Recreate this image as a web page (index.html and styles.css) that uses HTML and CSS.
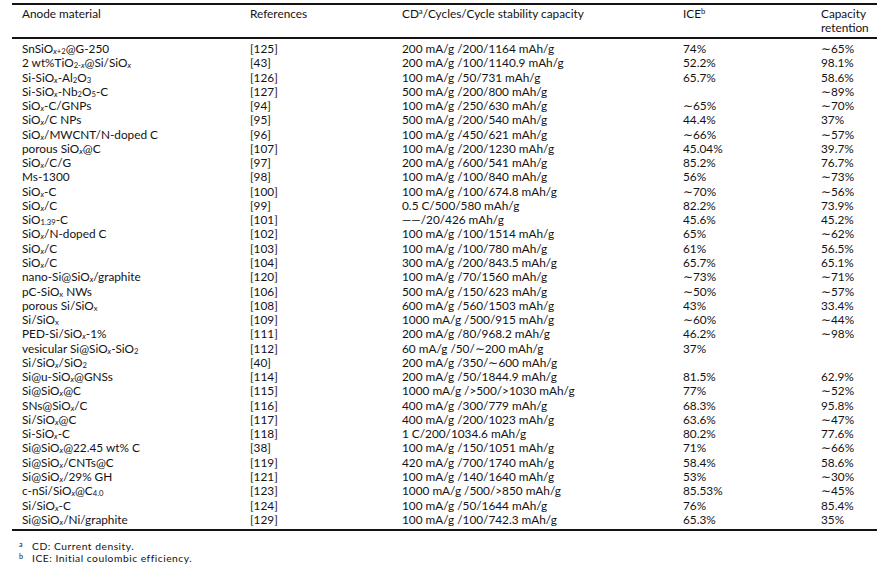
FILE: index.html
```html
<!DOCTYPE html>
<html>
<head>
<meta charset="utf-8">
<link rel="stylesheet" href="styles.css">
</head>
<body>
<div class="page">
<table class="data">
<colgroup>
<col class="c1"><col class="c2"><col class="c3"><col class="c4"><col class="c5">
</colgroup>
<thead>
<tr>
<th>Anode material</th>
<th>References</th>
<th>CD<sup>a</sup>/Cycles/Cycle stability capacity</th>
<th>ICE<sup>b</sup></th>
<th>Capacity<br>retention</th>
</tr>
</thead>
<tbody>
<tr class="first"><td>SnSiO<sub><i>x</i>+2</sub>@G-250</td><td>[125]</td><td>200 mA/g /200/1164 mAh/g</td><td>74%</td><td>∼65%</td></tr>
<tr><td>2 wt%TiO<sub>2-<i>x</i></sub>@Si/SiO<sub><i>x</i></sub></td><td>[43]</td><td>200 mA/g /100/1140.9 mAh/g</td><td>52.2%</td><td>98.1%</td></tr>
<tr><td>Si-SiO<sub><i>x</i></sub>-Al<sub>2</sub>O<sub>3</sub></td><td>[126]</td><td>100 mA/g /50/731 mAh/g</td><td>65.7%</td><td>58.6%</td></tr>
<tr><td>Si-SiO<sub><i>x</i></sub>-Nb<sub>2</sub>O<sub>5</sub>-C</td><td>[127]</td><td>500 mA/g /200/800 mAh/g</td><td></td><td>∼89%</td></tr>
<tr><td>SiO<sub><i>x</i></sub>-C/GNPs</td><td>[94]</td><td>100 mA/g /250/630 mAh/g</td><td>∼65%</td><td>∼70%</td></tr>
<tr><td>SiO<sub><i>x</i></sub>/C NPs</td><td>[95]</td><td>500 mA/g /200/540 mAh/g</td><td>44.4%</td><td>37%</td></tr>
<tr><td>SiO<sub><i>x</i></sub>/MWCNT/N-doped C</td><td>[96]</td><td>100 mA/g /450/621 mAh/g</td><td>∼66%</td><td>∼57%</td></tr>
<tr><td>porous SiO<sub><i>x</i></sub>@C</td><td>[107]</td><td>100 mA/g /200/1230 mAh/g</td><td>45.04%</td><td>39.7%</td></tr>
<tr><td>SiO<sub><i>x</i></sub>/C/G</td><td>[97]</td><td>200 mA/g /600/541 mAh/g</td><td>85.2%</td><td>76.7%</td></tr>
<tr><td>Ms-1300</td><td>[98]</td><td>100 mA/g /100/840 mAh/g</td><td>56%</td><td>∼73%</td></tr>
<tr><td>SiO<sub><i>x</i></sub>-C</td><td>[100]</td><td>100 mA/g /100/674.8 mAh/g</td><td>∼70%</td><td>∼56%</td></tr>
<tr><td>SiO<sub><i>x</i></sub>/C</td><td>[99]</td><td>0.5 C/500/580 mAh/g</td><td>82.2%</td><td>73.9%</td></tr>
<tr><td>SiO<sub>1.39</sub>-C</td><td>[101]</td><td>——/20/426 mAh/g</td><td>45.6%</td><td>45.2%</td></tr>
<tr><td>SiO<sub><i>x</i></sub>/N-doped C</td><td>[102]</td><td>100 mA/g /100/1514 mAh/g</td><td>65%</td><td>∼62%</td></tr>
<tr><td>SiO<sub><i>x</i></sub>/C</td><td>[103]</td><td>100 mA/g /100/780 mAh/g</td><td>61%</td><td>56.5%</td></tr>
<tr><td>SiO<sub><i>x</i></sub>/C</td><td>[104]</td><td>300 mA/g /200/843.5 mAh/g</td><td>65.7%</td><td>65.1%</td></tr>
<tr><td>nano-Si@SiO<sub><i>x</i></sub>/graphite</td><td>[120]</td><td>100 mA/g /70/1560 mAh/g</td><td>∼73%</td><td>∼71%</td></tr>
<tr><td>pC-SiO<sub>x</sub> NWs</td><td>[106]</td><td>500 mA/g /150/623 mAh/g</td><td>∼50%</td><td>∼57%</td></tr>
<tr><td>porous Si/SiO<sub>x</sub></td><td>[108]</td><td>600 mA/g /560/1503 mAh/g</td><td>43%</td><td>33.4%</td></tr>
<tr><td>Si/SiO<sub>x</sub></td><td>[109]</td><td>1000 mA/g /500/915 mAh/g</td><td>∼60%</td><td>∼44%</td></tr>
<tr><td>PED-Si/SiO<sub><i>x</i></sub>-1%</td><td>[111]</td><td>200 mA/g /80/968.2 mAh/g</td><td>46.2%</td><td>∼98%</td></tr>
<tr><td>vesicular Si@SiO<sub><i>x</i></sub>-SiO<sub>2</sub></td><td>[112]</td><td>60 mA/g /50/∼200 mAh/g</td><td>37%</td><td></td></tr>
<tr><td>Si/SiO<sub><i>x</i></sub>/SiO<sub>2</sub></td><td>[40]</td><td>200 mA/g /350/∼600 mAh/g</td><td></td><td></td></tr>
<tr><td>Si@u-SiO<sub><i>x</i></sub>@GNSs</td><td>[114]</td><td>200 mA/g /50/1844.9 mAh/g</td><td>81.5%</td><td>62.9%</td></tr>
<tr><td>Si@SiO<sub><i>x</i></sub>@C</td><td>[115]</td><td>1000 mA/g /&gt;500/&gt;1030 mAh/g</td><td>77%</td><td>∼52%</td></tr>
<tr><td>SNs@SiO<sub><i>x</i></sub>/C</td><td>[116]</td><td>400 mA/g /300/779 mAh/g</td><td>68.3%</td><td>95.8%</td></tr>
<tr><td>Si/SiO<sub><i>x</i></sub>@C</td><td>[117]</td><td>400 mA/g /200/1023 mAh/g</td><td>63.6%</td><td>∼47%</td></tr>
<tr><td>Si-SiO<sub><i>x</i></sub>-C</td><td>[118]</td><td>1 C/200/1034.6 mAh/g</td><td>80.2%</td><td>77.6%</td></tr>
<tr><td>Si@SiO<sub><i>x</i></sub>@22.45 wt% C</td><td>[38]</td><td>100 mA/g /150/1051 mAh/g</td><td>71%</td><td>∼66%</td></tr>
<tr><td>Si@SiO<sub><i>x</i></sub>/CNTs@C</td><td>[119]</td><td>420 mA/g /700/1740 mAh/g</td><td>58.4%</td><td>58.6%</td></tr>
<tr><td>Si@SiO<sub><i>x</i></sub>/29% GH</td><td>[121]</td><td>100 mA/g /140/1640 mAh/g</td><td>53%</td><td>∼30%</td></tr>
<tr><td>c-nSi/SiO<sub><i>x</i></sub>@C<sub>4.0</sub></td><td>[123]</td><td>1000 mA/g /500/&gt;850 mAh/g</td><td>85.53%</td><td>∼45%</td></tr>
<tr><td>Si/SiO<sub><i>x</i></sub>-C</td><td>[124]</td><td>100 mA/g /50/1644 mAh/g</td><td>76%</td><td>85.4%</td></tr>
<tr class="last"><td>Si@SiO<sub><i>x</i></sub>/Ni/graphite</td><td>[129]</td><td>100 mA/g /100/742.3 mAh/g</td><td>65.3%</td><td>35%</td></tr>
</tbody>
</table>
<div class="notes">
<p class="note"><span class="mark">a</span>CD: Current density.</p>
<p class="note"><span class="mark">b</span>ICE: Initial coulombic efficiency.</p>
</div>
</div>
</body>
</html>
```
FILE: styles.css
```css
html, body {
  margin: 0;
  padding: 0;
  background: #ffffff;
}
body {
  font-family: Lato, "Open Sans", sans-serif;
  font-size: 11.8px;
  color: #141213;
}
.page {
  padding: 3px 9px 0 12px;
}
.data {
  width: 865px;
  table-layout: fixed;
  border-collapse: collapse;
  border-top: 2px solid #141213;
  border-bottom: 2px solid #141213;
}
.c1 { width: 228px; }
.c2 { width: 152px; }
.c3 { width: 281px; }
.c4 { width: 138px; }
.c5 { width: 66px; }
.data th {
  font-weight: normal;
  text-align: left;
  vertical-align: top;
  padding: 2px 0 1.6px 10px;
  line-height: 14.2px;
  border-bottom: 2px solid #141213;
}
.data td {
  padding: 0 0 0 10px;
  line-height: 14.27px;
  white-space: nowrap;
  vertical-align: middle;
}
.data tr.first td { padding-top: 3px; }
.data tr.last td { padding-bottom: 2px; }
sub {
  font-size: 65%;
  line-height: 0;
  vertical-align: -1px;
}
sup {
  font-size: 65%;
  line-height: 0;
  vertical-align: 4px;
}
.notes {
  padding: 9px 0 0 7px;
}
.note {
  margin: 0;
  line-height: 12.4px;
  font-size: 10.3px;
  letter-spacing: 0.5px;
}
.mark {
  display: inline-block;
  width: 13px;
  font-size: 70%;
  letter-spacing: 0;
  vertical-align: 3px;
  line-height: 0;
}
```
